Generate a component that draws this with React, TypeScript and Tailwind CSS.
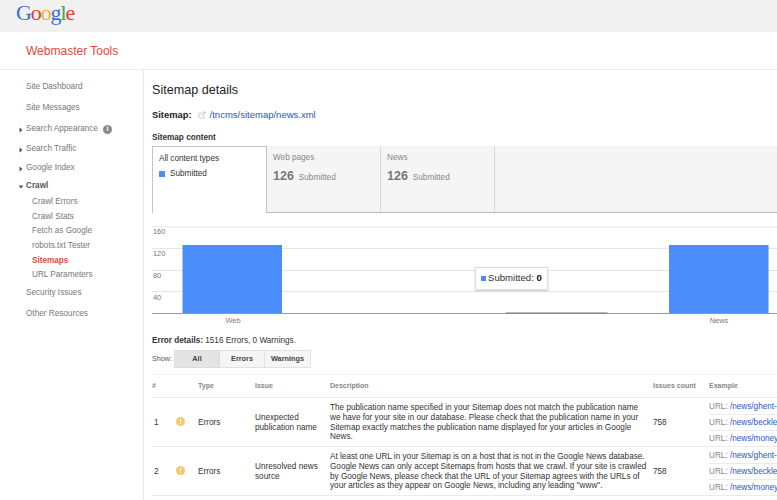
import { ExternalLink } from "lucide-react";

const sans = "font-['Liberation_Sans',Arial,sans-serif]";

function Caret({ down }: { down?: boolean }) {
  return (
    <svg width="6" height="6" viewBox="0 0 6 6" className="shrink-0">
      {down ? <path d="M0.5 1.5H5.5L3 4.5Z" fill="#555" /> : <path d="M1.5 0.5V5.5L4.5 3Z" fill="#555" />}
    </svg>
  );
}

function NavTop({ label, h, caret, down, bold, children }: { label: string; h: string; caret?: boolean; down?: boolean; bold?: boolean; children?: React.ReactNode }) {
  return (
    <div className={`${h} flex items-center`}>
      <div className="w-[26px] pl-[18px] flex items-center">{caret && <Caret down={down} />}</div>
      <span className={bold ? "font-bold text-[#555]" : "text-[#777]"}>{label}</span>
      {children}
    </div>
  );
}

function Sub({ label, red }: { label: string; red?: boolean }) {
  return (
    <div className={`h-[14.6px] pl-[32px] flex items-center ${red ? "text-[#dd4b39] font-bold" : "text-[#777]"}`}>{label}</div>
  );
}

function Warn() {
  return (
    <svg width="9" height="9" viewBox="0 0 9 9">
      <circle cx="4.5" cy="4.5" r="4.5" fill="#fbc56d" />
      <rect x="4" y="1.7" width="1" height="3.6" fill="#fff" />
      <rect x="4" y="6" width="1" height="1.1" fill="#fff" />
    </svg>
  );
}

const urls = ["/news/ghent-", "/news/beckle", "/news/money"];

function Row({ n, issue, desc }: { n: string; issue: string[]; desc: string[] }) {
  return (
    <div className="grid grid-cols-[23px_23px_57px_75px_323px_56px_1fr] h-[49px] pt-[1px] border-b border-[#ebebeb] items-center text-[8.2px] leading-[9.6px] text-[#333]">
      <div className="pl-[2px]">{n}</div>
      <div className="flex pl-[1px] pb-[3px]"><Warn /></div>
      <div>{"Errors"}</div>
      <div>{issue.map((t) => <div key={t}>{t}</div>)}</div>
      <div className="whitespace-nowrap">{desc.map((t) => <div key={t}>{t}</div>)}</div>
      <div>758</div>
      <div className="self-stretch flex flex-col overflow-hidden">
        {urls.map((u, i) => (
          <div key={u} className={`flex-1 flex items-center whitespace-nowrap text-[#888] ${i < 2 ? "border-b border-[#ebebeb]" : ""}`}>
            URL:&nbsp;<span className="text-[#2a55c4]">{u}</span>
          </div>
        ))}
      </div>
    </div>
  );
}

function Tab({ title }: { title: string }) {
  return (
    <div className="w-[114px] border-r border-[#d8d8d8] pl-[6px] pt-[6px] text-[#888]">
      <div className="leading-[11px]">{title}</div>
      <div className="flex items-baseline mt-[5px]">
        <span className="text-[12.5px] font-bold text-[#777] leading-[16px]">126</span>
        <span className="ml-[5px]">Submitted</span>
      </div>
    </div>
  );
}

function Chart() {
  const ticks = [22, 44, 65];
  return (
    <div className="relative h-[102px]">
      <svg width="625" height="102" className="block">
        <rect x="0" y="0" width="625" height="1.5" fill="#eeeeee" />
        {ticks.map((y) => <rect key={y} x="0" y={y} width="625" height="1" fill="#e6e6e6" />)}
        {[{ y: 7.5, l: "160" }, { y: 29.5, l: "120" }, { y: 51.5, l: "80" }, { y: 73.5, l: "40" }].map((t) => (
          <text key={t.l} x="1" y={t.y} fontSize="7.4" fill="#777" fontFamily="Liberation Sans">{t.l}</text>
        ))}
        <rect x="30.5" y="19" width="99.5" height="68.5" fill="#4a8dfb" />
        <rect x="517" y="19" width="99.5" height="68.5" fill="#4a8dfb" />
        <rect x="0" y="87" width="625" height="1" fill="#999" />
        <rect x="353.5" y="86.5" width="102" height="1" fill="#777" />
        <text x="81" y="96.5" fontSize="7.4" fill="#777" textAnchor="middle" fontFamily="Liberation Sans">Web</text>
        <text x="567" y="96.5" fontSize="7.4" fill="#777" textAnchor="middle" fontFamily="Liberation Sans">News</text>
      </svg>
      <div className="absolute left-[323px] top-[41px] w-[73px] h-[23px] bg-white border border-[#ddd] shadow-[0_1px_2px_rgba(0,0,0,0.2)] flex items-center pl-[5px] text-[9.6px] text-[#333] whitespace-nowrap">
        <span className="w-[5px] h-[5px] bg-[#4a8dfb] mr-[2px]" />
        Submitted:&nbsp;<b className="text-[#111]">0</b>
      </div>
    </div>
  );
}

export default function App() {
  return (
    <div className={`${sans} w-[777px] h-[500px] overflow-hidden bg-white text-[8.2px]`}>
      <div className="h-8 bg-[#f1f1f1] pl-[16px] flex items-start">
        <div className="text-[22px] leading-[25px] tracking-[-1.1px] font-['Liberation_Serif',serif]">
          <span className="text-[#3a6fd8]">G</span>
          <span className="text-[#d9432f]">o</span>
          <span className="text-[#eeb12a]">o</span>
          <span className="text-[#3a6fd8]">g</span>
          <span className="text-[#3fa34d]">l</span>
          <span className="text-[#d9432f]">e</span>
        </div>
      </div>
      <div className="h-[38px] border-b border-[#ebebeb] pl-[26px] flex items-center text-[12px] text-[#dd4b39]">Webmaster Tools</div>
      <div className="flex h-[430px]">
        <nav className="w-[144px] shrink-0 border-r border-[#ebebeb] pt-[7px]">
          <NavTop label="Site Dashboard" h="h-[21px]" />
          <NavTop label="Site Messages" h="h-[21px]" />
          <NavTop label="Search Appearance" h="h-[21px]" caret>
            <span className="ml-[5px] w-[9px] h-[9px] rounded-full bg-[#888] text-white text-[7px] font-bold flex items-center justify-center">i</span>
          </NavTop>
          <NavTop label="Search Traffic" h="h-[19px]" caret />
          <NavTop label="Google Index" h="h-[19px]" caret />
          <NavTop label="Crawl" h="h-[17px]" caret down bold />
          <div>
            <Sub label="Crawl Errors" />
            <Sub label="Crawl Stats" />
            <Sub label="Fetch as Google" />
            <Sub label="robots.txt Tester" />
            <Sub label="Sitemaps" red />
            <Sub label="URL Parameters" />
          </div>
          <NavTop label="Security Issues" h="h-[21px]" />
          <NavTop label="Other Resources" h="h-[22px]" />
        </nav>
        <main className="flex-1 min-w-0 pl-[8px]">
          <h1 className="mt-[12px] h-[16px] leading-[16px] text-[12.6px] text-[#222]">Sitemap details</h1>
          <div className="mt-[10px] h-[14px] flex items-center text-[#222]">
            <b className="text-[9.4px]">Sitemap:</b>
            <ExternalLink className="ml-[6px] mr-[4px] text-[#999]" size={8} strokeWidth={1.5} />
            <span className="text-[9.5px] text-[#2a55c4]">/tncms/sitemap/news.xml</span>
          </div>
          <div className="mt-[10px] h-[11px] leading-[11px] font-bold text-[#333]">Sitemap content</div>
          <div className="mt-[3px] h-[67px] flex bg-[#f5f5f5] border-b border-[#bbb]">
            <div className="w-[115px] -mb-px bg-white border-t border-l border-r border-[#c4c4c4] pl-[6px] pt-[6px] text-[#333]">
              <div className="leading-[11px]">All content types</div>
              <div className="flex items-center mt-[4px]">
                <span className="w-[6px] h-[6px] bg-[#4a8dfb] mr-[5px]" />
                Submitted
              </div>
            </div>
            <Tab title="Web pages" />
            <Tab title="News" />
          </div>
          <div className="mt-[13px]"><Chart /></div>
          <div className="h-[11px] leading-[11px] mt-[7px] text-[#333]"><b>Error details:</b> 1516 Errors, 0 Warnings.</div>
          <div className="mt-[4px] h-[18px] flex items-center">
            <span className="w-[22px] text-[7.2px] text-[#555]">Show:</span>
            <div className="flex text-[7.3px] font-bold text-[#444] h-[18px]">
              <div className="w-[46px] flex items-center justify-center bg-[#e4e4e4] border border-[#dcdcdc]">All</div>
              <div className="w-[45px] flex items-center justify-center bg-[#f5f5f5] border-y border-r border-[#e2e2e2]">Errors</div>
              <div className="w-[46px] flex items-center justify-center bg-[#f5f5f5] border-y border-r border-[#e2e2e2]">Warnings</div>
            </div>
          </div>
          <div className="mt-[6px] border-t border-[#f2f2f2]">
            <div className="grid grid-cols-[23px_23px_57px_75px_323px_56px_1fr] h-[23px] items-center border-b border-[#ebebeb] text-[7px] font-bold text-[#888]">
              <div>#</div><div />
              <div>Type</div><div>Issue</div><div>Description</div><div>Issues count</div><div>Example</div>
            </div>
            <Row
              n="1"
              issue={["Unexpected", "publication name"]}
              desc={[
                "The publication name specified in your Sitemap does not match the publication name",
                "we have for your site in our database. Please check that the publication name in your",
                "Sitemap exactly matches the publication name displayed for your articles in Google",
                "News.",
              ]}
            />
            <Row
              n="2"
              issue={["Unresolved news", "source"]}
              desc={[
                "At least one URL in your Sitemap is on a host that is not in the Google News database.",
                "Google News can only accept Sitemaps from hosts that we crawl. If your site is crawled",
                "by Google News, please check that the URL of your Sitemap agrees with the URLs of",
                'your articles as they appear on Google News, including any leading "www".',
              ]}
            />
          </div>
        </main>
      </div>
    </div>
  );
}
